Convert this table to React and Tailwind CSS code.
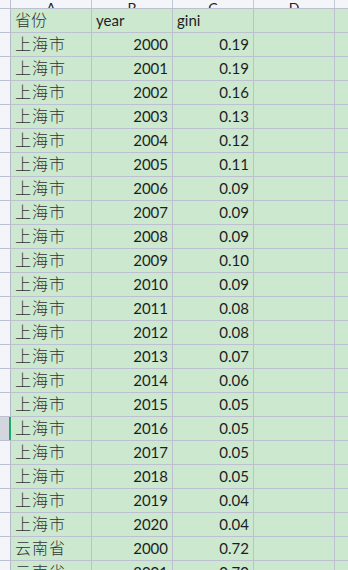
import React from 'react';

const data = [
  ['上海市', 2000, '0.19'],
  ['上海市', 2001, '0.19'],
  ['上海市', 2002, '0.16'],
  ['上海市', 2003, '0.13'],
  ['上海市', 2004, '0.12'],
  ['上海市', 2005, '0.11'],
  ['上海市', 2006, '0.09'],
  ['上海市', 2007, '0.09'],
  ['上海市', 2008, '0.09'],
  ['上海市', 2009, '0.10'],
  ['上海市', 2010, '0.09'],
  ['上海市', 2011, '0.08'],
  ['上海市', 2012, '0.08'],
  ['上海市', 2013, '0.07'],
  ['上海市', 2014, '0.06'],
  ['上海市', 2015, '0.05'],
  ['上海市', 2016, '0.05'],
  ['上海市', 2017, '0.05'],
  ['上海市', 2018, '0.05'],
  ['上海市', 2019, '0.04'],
  ['上海市', 2020, '0.04'],
  ['云南省', 2000, '0.72'],
  ['云南省', 2001, '0.70'],
];

const cols = ['A', 'B', 'C', 'D', 'E'];
const activeRow = 16;

const Cell = ({ children, align = 'left' }) => (
  <div
    className={`h-full w-[81px] shrink-0 flex items-end pb-[4px] border-r border-[#bcc0d1] ${
      align === 'right' ? 'justify-end pr-[4px]' : 'pl-[4px]'
    }`}
  >
    {children}
  </div>
);

const App = () => {
  return (
    <div className="w-[348px] h-[570px] overflow-hidden bg-[#cce8cf] text-[#1e1e1e] font-['Lato','Noto_Sans_CJK_SC',sans-serif]">
      {/* Column headers (mostly scrolled off the top) */}
      <div className="flex h-[9px] bg-[#f4f5f8] border-b border-[#bcc0d1] overflow-hidden">
        <div className="w-[11px] shrink-0 border-r border-[#bcc0d1]" />
        {cols.map((c) => (
          <div
            key={c}
            className="h-full w-[81px] shrink-0 flex items-end justify-center border-r border-[#c4c8d6]"
          >
            <span className="text-[14px] leading-none mb-[-7px] text-[#222]">{c}</span>
          </div>
        ))}
      </div>

      {/* Header row */}
      <div className="flex h-6 border-b border-[#bcc0d1]">
        <div className="w-[11px] shrink-0 bg-[#f4f5f8] border-r border-[#b4b8c9]" />
        <Cell>
          <span className="text-[16px] leading-none font-light text-[#333]">省份</span>
        </Cell>
        <Cell>
          <span className="text-[15px] leading-none">year</span>
        </Cell>
        <Cell>
          <span className="text-[15px] leading-none">gini</span>
        </Cell>
        <Cell />
        <Cell />
      </div>

      {data.map(([prov, year, gini], idx) => {
        const active = idx === activeRow;
        return (
          <div key={idx} className="flex h-6 border-b border-[#bcc0d1]">
            <div
              className={`w-[11px] shrink-0 ${
                active
                  ? 'bg-[#d3d6de] border-r-2 border-[#1fa866]'
                  : 'bg-[#f4f5f8] border-r border-[#b4b8c9]'
              }`}
            />
            <Cell>
              <span className="text-[16px] leading-none font-light text-[#333] tracking-[1px]">{prov}</span>
            </Cell>
            <Cell align="right">
              <span className="text-[15px] leading-none">{year}</span>
            </Cell>
            <Cell align="right">
              <span className="text-[15px] leading-none">{gini}</span>
            </Cell>
            <Cell />
            <Cell />
          </div>
        );
      })}
    </div>
  );
};

export default App;
